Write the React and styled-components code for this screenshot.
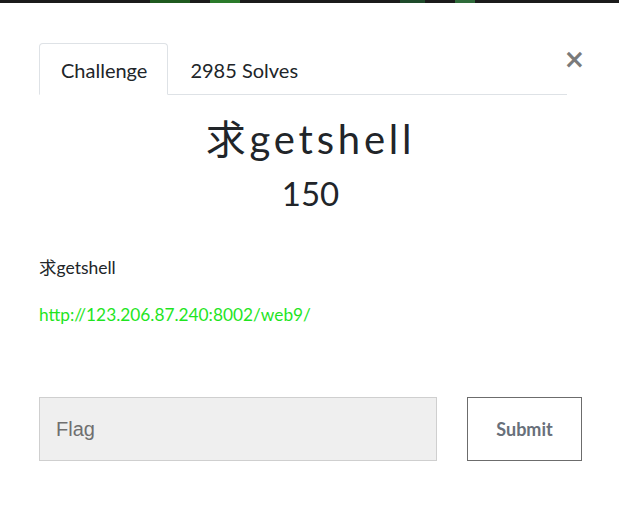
import React from "react";
import styled, { createGlobalStyle } from "styled-components";

const Global = createGlobalStyle`
  html, body { margin: 0; padding: 0; background: #ffffff; }
  body { font-family: Lato, "Noto Sans CJK SC", sans-serif; color: #212529; }
  * { box-sizing: border-box; }
`;

const Page = styled.div`
  width: 619px;
  height: 522px;
  overflow: hidden;
  background: #fff;
  display: flex;
  flex-direction: column;
`;

const BackdropStrip = styled.div`
  height: 3px;
  background: #1b1b1b;
  display: flex;
  flex: none;
`;

const StripBlob = styled.span`
  display: block;
  width: ${(p) => p.$w}px;
  margin-left: ${(p) => p.$m}px;
  background: ${(p) => p.$c};
`;

const Modal = styled.div`
  flex: 1;
  padding: 40px 37px 0 39px;
  display: flex;
  flex-direction: column;
`;

const Header = styled.div`
  display: flex;
  align-items: flex-start;
`;

const TabList = styled.div`
  flex: 1;
  display: flex;
  border-bottom: 1px solid #dee2e6;
  height: 52px;
`;

const Tab = styled.div`
  height: 52px;
  padding: 2px 20px 0 21px;
  display: flex;
  align-items: center;
  font-size: 20px;
  color: #212529;
  border: 1px solid ${(p) => (p.$active ? "#dee2e6" : "transparent")};
  border-bottom-color: ${(p) => (p.$active ? "#fff" : "transparent")};
  border-radius: 4px 4px 0 0;
  background: ${(p) => (p.$active ? "#fff" : "transparent")};
  margin-bottom: -1px;
`;

const Close = styled.button`
  width: 15px;
  margin-top: 2px;
  border: none;
  background: transparent;
  padding: 0;
  font-family: "DejaVu Sans", sans-serif;
  font-size: 26px;
  line-height: 28px;
  font-weight: bold;
  color: #7a7a7a;
  display: flex;
  justify-content: center;
  flex: none;
`;

const Title = styled.h1`
  margin: 20px 0 0;
  text-align: center;
  font-family: Lato, "Noto Sans CJK SC", sans-serif;
  font-weight: 400;
  font-size: 40px;
  line-height: 48px;
  letter-spacing: 3.8px;
  color: #212529;
`;

const Points = styled.h2`
  margin: 10px 0 0;
  text-align: center;
  font-weight: 400;
  font-size: 33px;
  line-height: 40px;
  color: #212529;
`;

const Description = styled.div`
  margin-top: 42px;
  font-size: 17.5px;
  line-height: 26px;
  color: #212529;
`;

const Para = styled.p`
  margin: 0 0 21px;
`;

const Link = styled.a`
  color: #1fe51f;
  text-decoration: none;
  font-size: 17.3px;
`;

const FormRow = styled.form`
  margin-top: 48px;
  display: flex;
  align-items: stretch;
  gap: 30px;
`;

const FlagInput = styled.input`
  width: 398px;
  height: 64px;
  background: #efefef;
  border: 1px solid #cfcfcf;
  padding: 0 16px;
  font-family: "Liberation Sans", Arial, sans-serif;
  font-size: 20px;
  color: #495057;
  outline: none;
  &::placeholder { color: #6f6f6f; }
`;

const SubmitButton = styled.button`
  width: 115px;
  height: 64px;
  background: #fff;
  border: 1px solid #6c6c6c;
  font-family: Lato, sans-serif;
  font-weight: 700;
  font-size: 18px;
  color: #68707a;
  padding: 0;
`;

export default function App() {
  return (
    <>
      <Global />
      <Page>
        <BackdropStrip>
          <StripBlob $w={40} $m={150} $c="#1f5a1f" />
          <StripBlob $w={30} $m={20} $c="#2a7a2a" />
          <StripBlob $w={25} $m={160} $c="#1e4a2a" />
          <StripBlob $w={20} $m={30} $c="#2f6b3a" />
        </BackdropStrip>
        <Modal>
          <Header>
            <TabList>
              <Tab $active>Challenge</Tab>
              <Tab>2985 Solves</Tab>
            </TabList>
            <Close type="button" aria-label="Close">×</Close>
          </Header>
          <Title>求getshell</Title>
          <Points>150</Points>
          <Description>
            <Para>求getshell</Para>
            <Para>
              <Link href="#">http://123.206.87.240:8002/web9/</Link>
            </Para>
          </Description>
          <FormRow onSubmit={(e) => e.preventDefault()}>
            <FlagInput placeholder="Flag" />
            <SubmitButton type="submit">Submit</SubmitButton>
          </FormRow>
        </Modal>
      </Page>
    </>
  );
}
